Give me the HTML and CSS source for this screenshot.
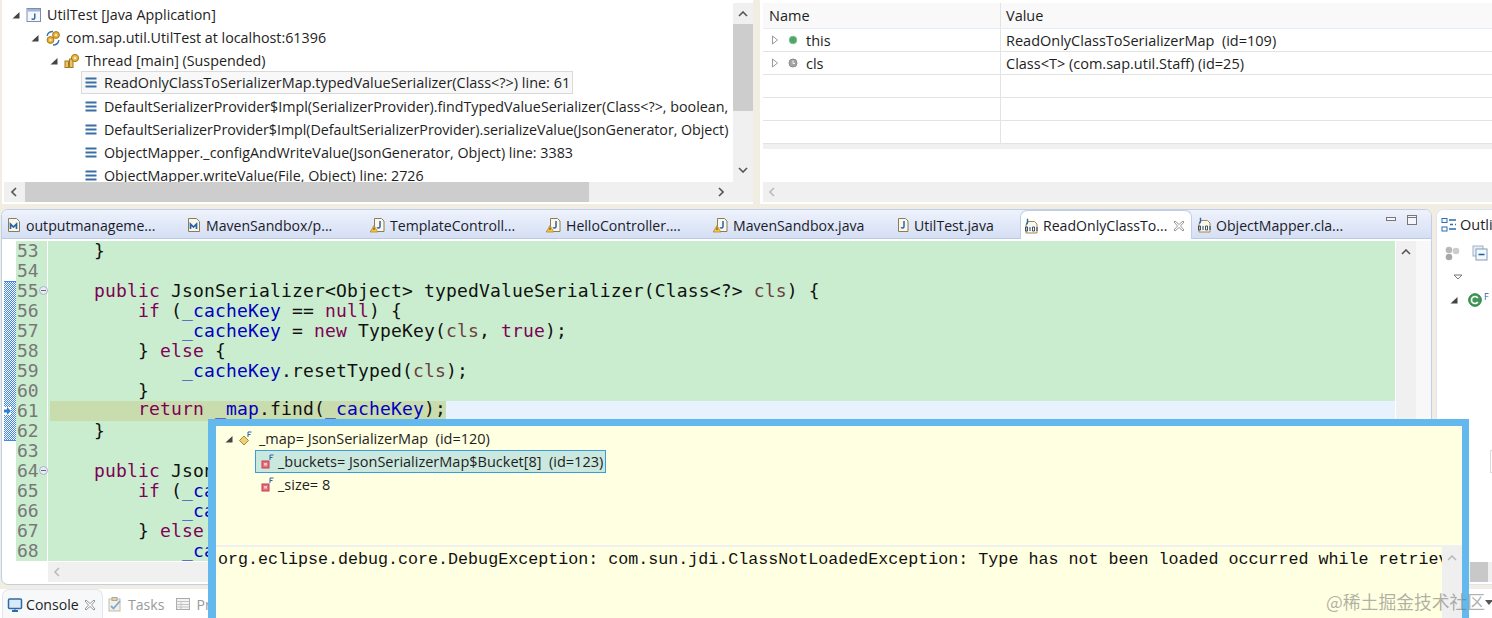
FILE: index.html
```html
<!DOCTYPE html>
<html lang="en">
<head>
    <meta charset="UTF-8">
    <title>Eclipse Debug</title>
    <link rel="stylesheet" href="styles.css">
</head>
<body>

<svg class="icon-defs" xmlns="http://www.w3.org/2000/svg">
    <symbol id="i-open" viewBox="0 0 8 8"><path d="M7.5 1v6.5H.5z" fill="#444"/></symbol>
    <symbol id="i-closed" viewBox="0 0 8 10"><path d="M1.5 1l5 4-5 4z" fill="#fff" stroke="#999"/></symbol>
    <symbol id="i-app" viewBox="0 0 16 16"><rect x="1" y="1.5" width="13.5" height="13" fill="#f4f7fb" stroke="#7d8db0"/><rect x="1.5" y="2" width="12.5" height="2.5" fill="#9db5d8"/><path d="M8.8 6.5v4.2q0 1.6-1.6 1.6-1.1 0-1.5-.8" fill="none" stroke="#2c5f9e" stroke-width="1.4"/></symbol>
    <symbol id="i-gears" viewBox="0 0 16 16"><circle cx="11" cy="5" r="3.4" fill="#e9b23c" stroke="#a5771a"/><circle cx="11" cy="5" r="1.1" fill="#fff3c9"/><circle cx="5.5" cy="10" r="3.4" fill="#e9b23c" stroke="#a5771a"/><circle cx="5.5" cy="10" r="1.1" fill="#fff3c9"/><path d="M2 6Q3 1.5 8 1.5M14 10q-1 5-6 5" fill="none" stroke="#3a74b0" stroke-width="1.3"/></symbol>
    <symbol id="i-thread" viewBox="0 0 16 16"><rect x="1" y="8" width="3.5" height="6.5" fill="#e8c36a" stroke="#a57b1e"/><rect x="5.5" y="6" width="3.5" height="8.5" fill="#e8c36a" stroke="#a57b1e"/><circle cx="11" cy="5" r="3.6" fill="#eab73f" stroke="#a5771a"/><circle cx="11" cy="5" r="1.2" fill="#fff3c9"/></symbol>
    <symbol id="i-frame" viewBox="0 0 14 12"><path d="M1.500 1.500h11M1.500 5.500h11M1.500 9.500h11" stroke="#3a6ea5" stroke-width="2.200"/></symbol>
    <symbol id="i-green" viewBox="0 0 10 10"><circle cx="5" cy="5" r="3.800" fill="#4fa565" stroke="#7fbf92"/></symbol>
    <symbol id="i-grey" viewBox="0 0 10 10"><circle cx="5" cy="5" r="4" fill="#a5a5a5" stroke="#8a8a8a"/><path d="M5 2.500V5.500h2" fill="none" stroke="#eee"/></symbol>
    <symbol id="i-mvn" viewBox="0 0 16 16"><path d="M2.500 1.500h8l3 3v10h-11z" fill="#f7f7f2" stroke="#8f7c4c"/><path d="M4.500 12V7l3 3 3-3v5" fill="none" stroke="#2a62a8" stroke-width="1.700"/></symbol>
    <symbol id="i-java" viewBox="0 0 16 16"><path d="M4.500 1.500h7l2.500 2.500v10.500h-9.500z" fill="#f8f8f2" stroke="#8f7c4c"/><path d="M10 4v5.500q0 1.500-1.500 1.500-1 0-1.300-.8" fill="none" stroke="#2a62a8" stroke-width="1.500"/></symbol>
    <symbol id="i-java-warn" viewBox="0 0 16 16"><use href="#i-java"/><path d="M4 8.500L7.800 15H.2z" fill="#f6c544" stroke="#b07b1d" stroke-width=".7"/><path d="M4 10.500v2.500" stroke="#5a3d00"/></symbol>
    <symbol id="i-class" viewBox="0 0 16 16"><path d="M4.500 3.500h7l2.500 2.500v9h-11v-8z" fill="#f8f8f2" stroke="#a58a4a"/><path d="M4.500 0.800v4q0 1.200-1.500 1.200" fill="none" stroke="#2a62a8" stroke-width="1.400"/><path d="M2.500 9h2v4h-2zM9.500 9h2v4h-2z" fill="none" stroke="#2b3f5e" stroke-width=".9"/><path d="M7 9v4M14 9v4" stroke="#2b3f5e"/></symbol>
    <symbol id="i-close" viewBox="0 0 12 12"><path d="M2 1l4 3.500L10 1l1 1-3.500 4L11 10l-1 1-4-3.500L2 11l-1-1 3.500-4L1 2z" fill="#fff" stroke="#8c8c8c" stroke-width=".9"/></symbol>
    <symbol id="i-field" viewBox="0 0 16 16"><rect x="3" y="7" width="7" height="7" fill="#e8707c" stroke="#c63a4a"/><rect x="5" y="9" width="3" height="2.500" fill="#f8c6cb"/><path d="M11 6V1h3.500M11 3.500h2.500" fill="none" stroke="#2a62a8"/></symbol>
    <symbol id="i-map" viewBox="0 0 16 16"><path d="M6 5l4.500 4.500L6 14 1.500 9.500z" fill="#f0cf7a" stroke="#a68836"/><path d="M10 6V1h3.500M10 3.500h2.500" fill="none" stroke="#2a62a8"/></symbol>
    <symbol id="i-console" viewBox="0 0 16 16"><rect x="1.500" y="2" width="13" height="9.500" rx="1" fill="#dbe8f6" stroke="#2b6ca8" stroke-width="1.500"/><path d="M5 14h6" stroke="#2b6ca8" stroke-width="2"/><path d="M8 11v3" stroke="#2b6ca8"/></symbol>
    <symbol id="i-tasks" viewBox="0 0 16 16"><rect x="2" y="3" width="11" height="12" fill="#f2efe6" stroke="#c2bda8"/><rect x="5" y="1.500" width="5" height="3" fill="#d9d2b8" stroke="#b0aa90"/><path d="M4 10l2.500 2.500L13 5" fill="none" stroke="#78a8dc" stroke-width="1.800"/></symbol>
    <symbol id="i-props" viewBox="0 0 16 16"><rect x="1.500" y="2.500" width="13" height="11" fill="#f3f3f3" stroke="#aaa"/><path d="M1.500 5.500h13M1.500 8.500h13M1.500 11h13M6 5.500v8" stroke="#c4c4c4"/></symbol>
    <symbol id="i-outline" viewBox="0 0 16 16"><rect x="1" y="1.500" width="5" height="4" fill="#fff" stroke="#2c6cb0"/><rect x="1" y="10" width="5" height="4" fill="#fff" stroke="#2c6cb0"/><path d="M8 3h7M9 7.500h3M14 7.500h1M8 12h7" stroke="#2c6cb0" stroke-width="1.300"/></symbol>
    <symbol id="i-balls" viewBox="0 0 16 16"><circle cx="5" cy="5" r="3.300" fill="#b9b9b9"/><circle cx="12" cy="6" r="3.300" fill="#ccc"/><circle cx="5" cy="12" r="3.300" fill="#a8a8a8"/></symbol>
    <symbol id="i-collapse" viewBox="0 0 16 16"><rect x="1" y="1" width="10" height="10" fill="#e8eef6" stroke="#9fb1c8"/><rect x="4" y="4" width="11" height="11" fill="#f4f8fc" stroke="#7f9cbe"/><path d="M6.500 9.500h6" stroke="#1f5c9c" stroke-width="1.500"/></symbol>
    <symbol id="i-cclass" viewBox="0 0 14 14"><circle cx="7" cy="7" r="6.300" fill="#3f9a58" stroke="#2c7a42"/><path d="M9.800 5Q8.800 3.500 7 3.500a3.500 3.500 0 0 0 0 7q1.800 0 2.800-1.500" fill="none" stroke="#fff" stroke-width="1.700"/></symbol>
</svg>

<div class="top-row">
    <section class="debug-panel">
        <div class="debug-main">
            <ul class="tree">
                <li class="row lvl-0"><svg class="arrow"><use href="#i-open"/></svg><svg class="ico"><use href="#i-app"/></svg><span>UtilTest [Java Application]</span></li>
                <li class="row lvl-1"><svg class="arrow"><use href="#i-open"/></svg><svg class="ico"><use href="#i-gears"/></svg><span>com.sap.util.UtilTest at localhost:61396</span></li>
                <li class="row lvl-2"><svg class="arrow"><use href="#i-open"/></svg><svg class="ico"><use href="#i-thread"/></svg><span>Thread [main] (Suspended)</span></li>
                <li class="row lvl-3 frame-on"><svg class="ico-frame"><use href="#i-frame"/></svg><span>ReadOnlyClassToSerializerMap.typedValueSerializer(Class&lt;?&gt;) line: 61</span></li>
                <li class="row lvl-3"><svg class="ico-frame"><use href="#i-frame"/></svg><span>DefaultSerializerProvider$Impl(SerializerProvider).findTypedValueSerializer(Class&lt;?&gt;, boolean,</span></li>
                <li class="row lvl-3 row-tight"><svg class="ico-frame"><use href="#i-frame"/></svg><span>DefaultSerializerProvider$Impl(DefaultSerializerProvider).serializeValue(JsonGenerator, Object)</span></li>
                <li class="row lvl-3"><svg class="ico-frame"><use href="#i-frame"/></svg><span>ObjectMapper._configAndWriteValue(JsonGenerator, Object) line: 3383</span></li>
                <li class="row lvl-3"><svg class="ico-frame"><use href="#i-frame"/></svg><span>ObjectMapper.writeValue(File, Object) line: 2726</span></li>
            </ul>
            <div class="vbar debug-vbar">
                <svg class="chev" viewBox="0 0 10 6"><path d="M1 5l4-4 4 4" fill="none" stroke="#555" stroke-width="1.600"/></svg>
                <div class="vthumb"></div>
                <svg class="chev chev-end" viewBox="0 0 10 6"><path d="M1 1l4 4 4-4" fill="none" stroke="#555" stroke-width="1.600"/></svg>
            </div>
        </div>
        <div class="hbar debug-hbar">
            <svg class="chev-h" viewBox="0 0 6 10"><path d="M5 1L1 5l4 4" fill="none" stroke="#555" stroke-width="1.600"/></svg>
            <div class="hthumb"></div>
            <svg class="chev-h" viewBox="0 0 6 10"><path d="M1 1l4 4-4 4" fill="none" stroke="#555" stroke-width="1.600"/></svg>
        </div>
    </section>

    <section class="vars-panel">
        <div class="vars-table">
            <div class="vars-head"><div class="col-name">Name</div><div class="col-value">Value</div></div>
            <div class="vars-row"><div class="col-name"><svg class="tw"><use href="#i-closed"/></svg><svg class="dot"><use href="#i-green"/></svg><span>this</span></div><div class="col-value">ReadOnlyClassToSerializerMap  (id=109)</div></div>
            <div class="vars-row"><div class="col-name"><svg class="tw"><use href="#i-closed"/></svg><svg class="dot"><use href="#i-grey"/></svg><span>cls</span></div><div class="col-value">Class&lt;T&gt; (com.sap.util.Staff) (id=25)</div></div>
            <div class="vars-row"><div class="col-name"></div><div class="col-value"></div></div>
            <div class="vars-row"><div class="col-name"></div><div class="col-value"></div></div>
            <div class="vars-row"><div class="col-name"></div><div class="col-value"></div></div>
        </div>
        <div class="vars-band"></div>
        <div class="hbar vars-hbar">
            <svg class="chev-h" viewBox="0 0 6 10"><path d="M5 1L1 5l4 4" fill="none" stroke="#bbb" stroke-width="1.600"/></svg>
        </div>
    </section>
</div>

<div class="mid-row">
    <section class="editor">
        <div class="tabbar">
            <div class="tab"><svg class="ico"><use href="#i-mvn"/></svg><span>outputmanageme...</span></div>
            <div class="tab"><svg class="ico"><use href="#i-mvn"/></svg><span>MavenSandbox/p...</span></div>
            <div class="tab"><svg class="ico"><use href="#i-java-warn"/></svg><span>TemplateControll...</span></div>
            <div class="tab"><svg class="ico"><use href="#i-java-warn"/></svg><span>HelloController....</span></div>
            <div class="tab"><svg class="ico"><use href="#i-java-warn"/></svg><span>MavenSandbox.java</span></div>
            <div class="tab"><svg class="ico"><use href="#i-java"/></svg><span>UtilTest.java</span></div>
            <div class="tab tab-active"><svg class="ico"><use href="#i-class"/></svg><span>ReadOnlyClassTo...</span><svg class="x"><use href="#i-close"/></svg></div>
            <div class="tab"><svg class="ico"><use href="#i-class"/></svg><span>ObjectMapper.cla...</span></div>
            <div class="win-btns">
                <svg class="win-min" viewBox="0 0 10 5"><rect x=".5" y=".5" width="9" height="3" fill="#f4f6fb" stroke="#777"/></svg>
                <svg class="win-max" viewBox="0 0 10 10"><rect x=".5" y=".5" width="9" height="9" fill="#f4f6fb" stroke="#777"/><path d="M.5 2.500h9" stroke="#777"/></svg>
            </div>
        </div>
        <div class="editor-body">
            <div class="lines">
                <div class="line"><div class="mark"></div><div class="num">53</div><div class="code">    }</div></div>
                <div class="line"><div class="mark"></div><div class="num">54</div><div class="code"></div></div>
                <div class="line changed first"><div class="mark"></div><div class="num">55<i class="fold"></i></div><div class="code">    <b>public</b> JsonSerializer&lt;Object&gt; typedValueSerializer(Class&lt;?&gt; <em>cls</em>) {</div></div>
                <div class="line changed"><div class="mark"></div><div class="num">56</div><div class="code">        <b>if</b> (<u>_cacheKey</u> == <b>null</b>) {</div></div>
                <div class="line changed"><div class="mark"></div><div class="num">57</div><div class="code">            <u>_cacheKey</u> = <b>new</b> TypeKey(<em>cls</em>, <b>true</b>);</div></div>
                <div class="line changed"><div class="mark"></div><div class="num">58</div><div class="code">        } <b>else</b> {</div></div>
                <div class="line changed"><div class="mark"></div><div class="num">59</div><div class="code">            <u>_cacheKey</u>.resetTyped(<em>cls</em>);</div></div>
                <div class="line changed"><div class="mark"></div><div class="num">60</div><div class="code">        }</div></div>
                <div class="line changed current"><div class="mark"><svg class="ptr" viewBox="0 0 7 8"><path d="M0 2.500h3V0l4 4-4 4V5.500H0z" fill="#2f7fd0"/></svg></div><div class="num">61</div><div class="code"><span class="stop-hl">        <b>return</b> <u>_map</u>.find(<u>_cacheKey</u>);</span></div></div>
                <div class="line changed last"><div class="mark"></div><div class="num">62</div><div class="code">    }</div></div>
                <div class="line"><div class="mark"></div><div class="num">63</div><div class="code"></div></div>
                <div class="line"><div class="mark"></div><div class="num">64<i class="fold"></i></div><div class="code">    <b>public</b> JsonSerializer&lt;Object&gt; untypedValueSerializer(Class&lt;?&gt; <em>cls</em>) {</div></div>
                <div class="line"><div class="mark"></div><div class="num">65</div><div class="code">        <b>if</b> (<u>_cacheKey</u> == <b>null</b>) {</div></div>
                <div class="line"><div class="mark"></div><div class="num">66</div><div class="code">            <u>_cacheKey</u> = <b>new</b> TypeKey(<em>cls</em>, <b>false</b>);</div></div>
                <div class="line"><div class="mark"></div><div class="num">67</div><div class="code">        } <b>else</b> {</div></div>
                <div class="line"><div class="mark"></div><div class="num">68</div><div class="code">            <u>_cacheKey</u>.resetUntyped(<em>cls</em>);</div></div>
            </div>
            <div class="vbar editor-vbar">
                <svg class="chev" viewBox="0 0 10 6"><path d="M1 5l4-4 4 4" fill="none" stroke="#555" stroke-width="1.600"/></svg>
            </div>
            <div class="overview"></div>
        </div>
        <div class="hbar editor-hbar">
            <svg class="chev-h" viewBox="0 0 6 10"><path d="M5 1L1 5l4 4" fill="none" stroke="#bbb" stroke-width="1.600"/></svg>
        </div>
    </section>

    <section class="outline">
        <div class="outline-tab"><svg class="ico"><use href="#i-outline"/></svg><span>Outline</span></div>
        <div class="outline-tools"><svg class="ico"><use href="#i-balls"/></svg><svg class="ico"><use href="#i-collapse"/></svg></div>
        <svg class="menu-tri" viewBox="0 0 10 6"><path d="M1 1h8L5 5z" fill="#fff" stroke="#777"/></svg>
        <div class="outline-item"><svg class="arrow"><use href="#i-open"/></svg><svg class="ico-c"><use href="#i-cclass"/></svg><sup>F</sup></div>
        <div class="outline-sel"></div>
        <div class="hbar outline-hbar"><div class="outline-thumb"></div></div>
    </section>
</div>

<div class="bottom-row">
    <div class="console-tab"><svg class="ico"><use href="#i-console"/></svg><span>Console</span><svg class="x"><use href="#i-close"/></svg></div>
    <div class="other-tab"><svg class="ico"><use href="#i-tasks"/></svg><span>Tasks</span></div>
    <div class="other-tab"><svg class="ico"><use href="#i-props"/></svg><span>Problems</span></div>
    <svg class="view-menu" viewBox="0 0 8 5"><path d="M0 0h8L4 5z" fill="#555"/></svg>
</div>

<div class="popup">
    <div class="popup-tree">
        <div class="pop-row pop-root"><svg class="arrow"><use href="#i-open"/></svg><svg class="ico"><use href="#i-map"/></svg><span>_map= JsonSerializerMap  (id=120)</span></div>
        <div class="pop-row pop-child pop-sel"><svg class="ico"><use href="#i-field"/></svg><span>_buckets= JsonSerializerMap$Bucket[8]  (id=123)</span></div>
        <div class="pop-row pop-child"><svg class="ico"><use href="#i-field"/></svg><span>_size= 8</span></div>
    </div>
    <div class="popup-detail">
        <div class="detail-text">org.eclipse.debug.core.DebugException: com.sun.jdi.ClassNotLoadedException: Type has not been loaded occurred while retriev</div>
        <div class="vbar detail-vbar">
            <svg class="chev" viewBox="0 0 10 6"><path d="M1 5l4-4 4 4" fill="none" stroke="#bbb" stroke-width="1.600"/></svg>
        </div>
    </div>
</div>

<div class="watermark">@稀土掘金技术社区</div>

</body>
</html>
```
FILE: styles.css
```css
* {
    box-sizing: border-box;
}
body {
    margin: 0;
    width: 1492px;
    height: 618px;
    overflow: hidden;
    position: relative;
    background-color: #f1ede2;
    font-family: "Open Sans", "Noto Sans", sans-serif;
    font-size: 14.5px;
    color: #1e1e1e;
}
.icon-defs {
    display: none;
}
ul {
    margin: 0;
    padding: 0;
    list-style: none;
}

/* scrollbars */
.vbar {
    width: 20px;
    background-color: #f0f0f0;
    display: flex;
    flex-direction: column;
    align-items: center;
    flex-shrink: 0;
}
.hbar {
    height: 20px;
    background-color: #f0f0f0;
    display: flex;
    align-items: center;
}
.chev {
    width: 10px;
    height: 6px;
    margin: 8px 0 7px;
    flex-shrink: 0;
}
.chev-end {
    margin-top: auto;
    margin-bottom: 9px;
}
.chev-h {
    width: 6px;
    height: 10px;
    flex-shrink: 0;
}

/* top panels */
.top-row {
    display: flex;
    height: 204px;
    padding-left: 2px;
}
.debug-panel {
    width: 751px;
    background-color: #fff;
    display: flex;
    flex-direction: column;
}
.debug-main {
    display: flex;
    height: 182px;
}
.tree {
    flex: 1;
    padding-top: 3px;
    overflow: hidden;
}
.row {
    display: flex;
    align-items: center;
    height: 23px;
    font-size: 14.3px;
    white-space: nowrap;
    overflow: hidden;
}
.row-tight {
    letter-spacing: -0.05px;
}
.lvl-0 { padding-left: 10px; }
.lvl-1 { padding-left: 29px; }
.lvl-2 { padding-left: 48px; }
.lvl-3 { padding-left: 80px; }
.arrow {
    width: 8px;
    height: 8px;
    margin-right: 6px;
    flex-shrink: 0;
}
.ico {
    width: 16px;
    height: 16px;
    flex-shrink: 0;
}
.row .ico {
    margin-right: -2px;
}
.row .ico + span {
    margin-left: 7px;
}
.ico-frame {
    width: 14px;
    height: 12px;
    margin: 0 6px 0 2px;
    flex-shrink: 0;
}
.frame-on {
    width: 492px;
    font-size: 14.45px;
    background-color: #f8f8f8;
    border: 1px solid #dadada;
    margin-left: 79px;
    padding-left: 0;
    margin-top: -1px;
    margin-bottom: 1px;
}
.debug-vbar {
    height: 179px;
    margin-top: 3px;
}
.vthumb {
    width: 100%;
    height: 87px;
    background-color: #cdcdcd;
}
.debug-hbar {
    justify-content: space-between;
    margin-left: 2px;
    padding: 0 29px 0 7px;
}
.hthumb {
    width: 564px;
    height: 100%;
    background-color: #cdcdcd;
    margin-left: 8px;
    margin-right: auto;
}

.vars-panel {
    flex: 1;
    margin-left: 7px;
    background-color: #fff;
    padding: 3px 0 0 3px;
    display: flex;
    flex-direction: column;
}
.vars-head,
.vars-row {
    display: flex;
    height: 23px;
    border-bottom: 1px solid #e3e3e3;
}
.vars-head {
    height: 26px;
    background-color: #f9f9f9;
    border-bottom-color: #e4ecf7;
}
.col-name {
    width: 238px;
    padding-left: 6px;
    border-right: 1px solid #e3e3e3;
    display: flex;
    align-items: center;
}
.col-value {
    padding-left: 5px;
    display: flex;
    align-items: center;
    white-space: pre;
}
.tw {
    width: 8px;
    height: 10px;
    margin: 0 8px 0 2px;
}
.dot {
    width: 10px;
    height: 10px;
    margin: 0 8px 0 1px;
}
.vars-band {
    height: 5px;
    background-color: #f0f0f0;
}
.vars-hbar {
    margin-top: auto;
    margin-bottom: 2px;
    padding-left: 6px;
}

/* editor */
.mid-row {
    display: flex;
    height: 376px;
    margin-top: 5px;
    padding-left: 1px;
}
.editor {
    width: 1431px;
    background-color: #fff;
    border: 1px solid #bfcfe8;
    border-radius: 7px;
    overflow: hidden;
}
.tabbar {
    height: 29px;
    display: grid;
    grid-template-columns: 180px 184px 176px 167px 181px 128px 174px 172px 1fr;
    padding-left: 2px;
    background-image: linear-gradient(#eef2fc, #d5dff4);
    border-bottom: 1px solid #bcc9de;
    margin-bottom: 2px;
}
.tab {
    display: flex;
    align-items: center;
    padding: 1px 0 0 2px;
    font-size: 14.1px;
    color: #1b1b2a;
    white-space: nowrap;
    height: 29px;
}
.tab .ico {
    margin-right: 4px;
}
.tab-active {
    background-color: #fff;
    border: 1px solid #bfcfe8;
    border-bottom: none;
    border-radius: 7px 7px 0 0;
    margin-right: 2px;
}
.x {
    width: 12px;
    height: 12px;
    margin-left: auto;
    margin-right: 6px;
}
.win-btns {
    display: flex;
    align-items: flex-start;
    justify-content: flex-end;
    gap: 11px;
    padding: 5px 14px 0 0;
}
.win-min {
    width: 10px;
    height: 5px;
    margin-top: 2px;
}
.win-max {
    width: 10px;
    height: 10px;
}
.editor-body {
    display: flex;
    height: 320px;
}
.lines {
    width: 1393px;
    font-family: "DejaVu Sans Mono", monospace;
    font-size: 18px;
    letter-spacing: 0.16px;
    color: #111;
    background-color: #cbedcf;
}
.line {
    display: flex;
    height: 20px;
    line-height: 20px;
}
.mark {
    width: 14px;
    background-color: #fff;
    flex-shrink: 0;
    border-left: 2px solid #fff;
    display: flex;
    align-items: center;
}
.changed .mark {
    background: url("data:image/svg+xml,%3Csvg xmlns='http://www.w3.org/2000/svg' width='2' height='2'%3E%3Crect width='2' height='2' fill='%23fff'/%3E%3Crect width='1' height='1' fill='%233f86e8'/%3E%3Crect x='1' y='1' width='1' height='1' fill='%233f86e8'/%3E%3C/svg%3E");
}
.first .mark {
    box-shadow: inset 0 1px #3f8ae8;
}
.last .mark {
    box-shadow: inset 0 -1px #3f8ae8;
}
.ptr {
    width: 7px;
    height: 8px;
    background-color: #fff;
}
.num {
    width: 32px;
    flex-shrink: 0;
    padding-left: 1px;
    color: #787878;
    letter-spacing: 0;
    border-right: 1px solid #fff;
    position: relative;
}
.fold {
    position: absolute;
    left: 23px;
    top: 5px;
    width: 9px;
    height: 9px;
    border-radius: 50%;
    background-color: #e8ecf4;
    border: 1px solid #a8b4c8;
}
.fold::after {
    content: "";
    position: absolute;
    left: 1px;
    top: 3px;
    width: 5px;
    height: 1px;
    background-color: #667;
}
.code {
    flex: 1;
    padding-left: 2px;
    white-space: pre;
}
.code b {
    font-weight: normal;
    color: #7f0055;
}
.code u {
    color: #0000c0;
    text-decoration: none;
}
.code em {
    font-style: normal;
    color: #6a3e3e;
}
.current .code {
    background: linear-gradient(#e8f2fe, #e8f2fe) 2px 0 no-repeat;
}
.stop-hl {
    display: inline-block;
    vertical-align: top;
    height: 20px;
    line-height: 16px;
    background-color: #c9dcae;
}
.editor-vbar {
    margin-left: 1px;
}
.overview {
    flex: 1;
    background-color: #f8f8f8;
}
.editor-hbar {
    margin: 1px 35px 0 46px;
    padding-left: 6px;
}

/* outline */
.outline {
    flex: 1;
    margin-left: 4px;
    background-color: #fff;
    border: 1px solid #dfe5f0;
    border-right: none;
    border-radius: 7px 0 0 7px;
    position: relative;
    white-space: nowrap;
    overflow: hidden;
}
.outline-tab {
    display: flex;
    align-items: center;
    gap: 3px;
    height: 29px;
    padding-left: 4px;
}
.outline-tools {
    display: flex;
    gap: 12px;
    padding: 6px 0 0 7px;
    height: 24px;
}
.menu-tri {
    display: block;
    width: 10px;
    height: 6px;
    margin: 11px 0 0 16px;
}
.outline-item {
    display: flex;
    align-items: center;
    padding: 10px 0 0 13px;
    height: 30px;
}
.outline-item .arrow {
    margin-right: 10px;
}
.ico-c {
    width: 14px;
    height: 14px;
}
.outline-item sup {
    font-size: 9px;
    color: #2a62a8;
    margin: -8px 0 0 2px;
}
.outline-sel {
    position: absolute;
    left: 53px;
    top: 240px;
    width: 10px;
    height: 23px;
    border: 1px solid #dadada;
    border-right: none;
}
.outline-hbar {
    position: absolute;
    left: 8px;
    right: 0;
    top: 352px;
}
.outline-thumb {
    width: 18px;
    height: 100%;
    margin-left: 25px;
    background-color: #c8c8c8;
}

/* console strip */
.bottom-row {
    display: flex;
    height: 29px;
    margin-top: 4px;
    padding-left: 2px;
    background-color: #fff;
    font-size: 14.1px;
    align-items: center;
    position: relative;
}
.console-tab {
    width: 101px;
    height: 29px;
    display: flex;
    align-items: center;
    gap: 3px;
    padding: 1px 0 0 4px;
    background-color: #f7f8fa;
    border: 1px solid #e2e6ee;
    border-bottom: none;
    border-radius: 7px 7px 0 0;
}
.console-tab .x {
    margin-right: 6px;
}
.other-tab {
    display: flex;
    align-items: center;
    gap: 5px;
    color: #9a9a9a;
    padding: 1px 0 0 4px;
    margin-right: 7px;
}
.view-menu {
    position: absolute;
    left: 1485px;
    top: 11px;
    width: 8px;
    height: 5px;
}

/* hover popup */
.popup {
    position: absolute;
    left: 208px;
    top: 419px;
    width: 1261px;
    height: 210px;
    background-color: #ffffe1;
    border: solid #63b9ee;
    border-width: 7px 7px 7px 8px;
}
.popup-tree {
    height: 121px;
    padding-top: 1px;
    border-bottom: 2px solid #f0f0f0;
}
.pop-row {
    display: flex;
    align-items: center;
    height: 23px;
    white-space: pre;
}
.pop-root {
    padding-left: 9px;
}
.pop-root .arrow {
    margin-right: 5px;
}
.pop-root .ico {
    margin-right: 5px;
}
.pop-child {
    margin-left: 39px;
    width: 351px;
    padding-left: 4px;
}
.pop-child .ico {
    margin-right: 3px;
}
.pop-sel {
    background-color: #cbe8de;
    border: 1px solid #3a9ddc;
    padding-left: 3px;
}
.popup-detail {
    display: flex;
    height: 90px;
}
.detail-text {
    flex: 1;
    overflow: hidden;
    white-space: nowrap;
    padding: 3px 0 0 2px;
    font-family: "Liberation Mono", monospace;
    font-size: 16.68px;
    line-height: 20px;
    color: #111;
}
.detail-vbar {
    background-color: #efefef;
}

.watermark {
    position: absolute;
    left: 1326px;
    top: 589px;
    font-family: "Noto Sans CJK SC", sans-serif;
    font-size: 17.8px;
    line-height: 24px;
    color: rgba(110, 110, 110, 0.55);
    white-space: nowrap;
}
```
